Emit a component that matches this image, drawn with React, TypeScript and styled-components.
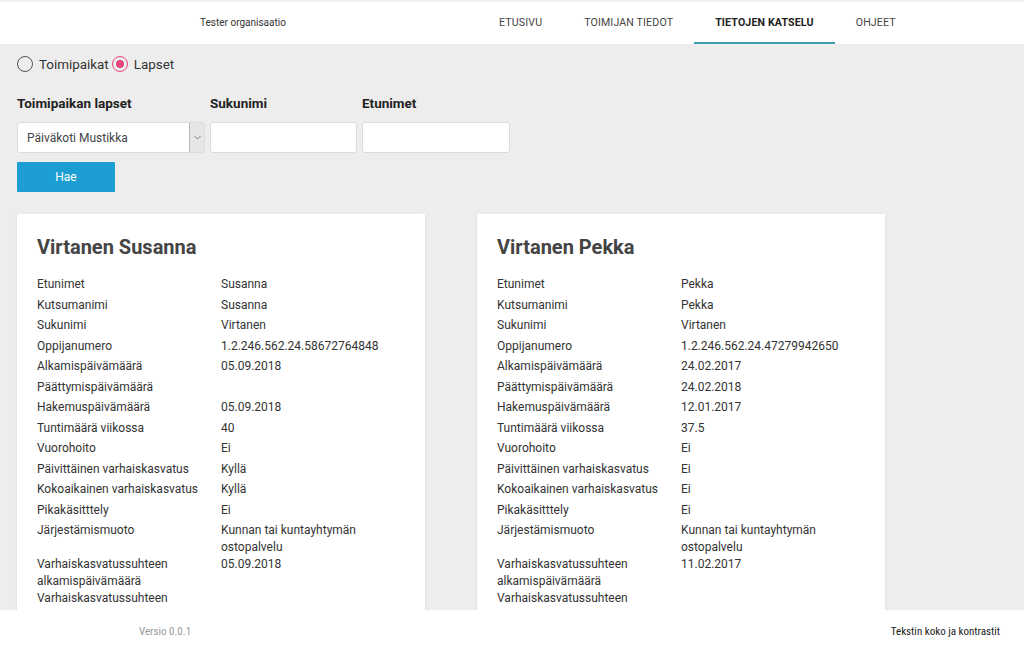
import styled, { createGlobalStyle } from "styled-components";

const GlobalStyle = createGlobalStyle`
  html, body {
    margin: 0;
    padding: 0;
    height: 100%;
    background: #ededed;
    font-family: Roboto, "Liberation Sans", sans-serif;
    color: #333;
  }
  #root {
    height: 100%;
  }
  * {
    box-sizing: border-box;
  }
`;

const Page = styled.div`
  display: flex;
  flex-direction: column;
  height: 100vh;
  overflow: hidden;
`;

const Header = styled.header`
  display: flex;
  align-items: stretch;
  height: 44px;
  background: #fff;
  border-top: 2px solid #f1f1f1;
  flex-shrink: 0;
`;

const Org = styled.div`
  width: 478px;
  display: flex;
  align-items: center;
  justify-content: center;
  font-size: 10px;
  color: #333;
  padding: 0 0 2px 8px;
`;

const Nav = styled.nav`
  display: flex;
`;

const Tab = styled.a<{ $active?: boolean }>`
  display: flex;
  align-items: center;
  padding: 0 21px 0;
  font-size: 10.6px;
  letter-spacing: 0.15px;
  color: ${(p) => (p.$active ? "#222" : "#444")};
  font-weight: ${(p) => (p.$active ? 700 : 400)};
  border-bottom: 2px solid ${(p) => (p.$active ? "#3d9db3" : "transparent")};
  text-decoration: none;
  cursor: pointer;
`;

const Main = styled.main`
  flex: 1;
  overflow: hidden;
  padding: 12px 17px 0;
`;

const RadioRow = styled.div`
  display: flex;
  align-items: center;
  gap: 3px;
  height: 16px;
`;

const RadioLabel = styled.label`
  display: flex;
  align-items: center;
  gap: 6px;
  font-size: 13.4px;
  color: #333;
  cursor: pointer;
`;

const RadioCircle = styled.span<{ $checked?: boolean }>`
  width: 16px;
  height: 16px;
  border-radius: 50%;
  border: 1.5px solid ${(p) => (p.$checked ? "#e8437c" : "#555")};
  display: flex;
  align-items: center;
  justify-content: center;
  &::after {
    content: "";
    width: 8px;
    height: 8px;
    border-radius: 50%;
    background: ${(p) => (p.$checked ? "#e8437c" : "transparent")};
  }
`;

const Fields = styled.div`
  display: flex;
  gap: 5px;
  margin-top: 23px;
`;

const Field = styled.div<{ $width: number }>`
  display: flex;
  flex-direction: column;
  width: ${(p) => p.$width}px;
`;

const FieldLabel = styled.label`
  font-size: 13.5px;
  font-weight: 700;
  color: #222;
  height: 17px;
  line-height: 17px;
  margin-bottom: 10px;
`;

const SelectBox = styled.div`
  display: flex;
  height: 31px;
  background: #fff;
  border: 1px solid #dcdcdc;
  border-radius: 3px;
  overflow: hidden;
`;

const Select = styled.select`
  flex: 1;
  border: none;
  appearance: none;
  background: transparent;
  font-family: inherit;
  font-size: 12px;
  color: #444;
  padding: 0 9px;
  outline: none;
`;

const SelectArrow = styled.span`
  width: 15px;
  display: flex;
  align-items: center;
  justify-content: center;
  background: #e6e6e6;
  border-left: 1px solid #b9b9b9;
  color: #777;
`;

const Input = styled.input`
  height: 31px;
  width: 100%;
  background: #fff;
  border: 1px solid #dcdcdc;
  border-radius: 3px;
  font-family: inherit;
  font-size: 12px;
  padding: 0 8px;
  outline: none;
`;

const Button = styled.button`
  display: block;
  margin-top: 9px;
  width: 98px;
  height: 30px;
  border: none;
  border-radius: 1px;
  background: #1d9ed3;
  color: #fff;
  font-family: inherit;
  font-size: 12px;
  cursor: pointer;
`;

const Cards = styled.div`
  display: grid;
  grid-template-columns: 408px 408px;
  gap: 52px;
  margin-top: 22px;
  align-items: start;
`;

const Card = styled.section`
  background: #fff;
  box-shadow: 0 1px 3px rgba(0, 0, 0, 0.08);
  padding: 21px 20px 20px;
`;

const Title = styled.h2`
  margin: 0 0 17px;
  font-size: 20px;
  font-weight: 700;
  color: #444;
  line-height: 24px;
`;

const Row = styled.div`
  display: grid;
  grid-template-columns: 184px 184px;
  min-height: 20.5px;
  font-size: 12px;
  line-height: 17px;
  color: #333;
`;

const Cell = styled.div`
  padding-right: 4px;
`;

const Footer = styled.footer`
  flex-shrink: 0;
  height: 45px;
  background: #fff;
  display: flex;
  align-items: center;
  justify-content: space-between;
  padding: 0 24px 2px 139px;
  font-family: "Liberation Sans Narrow", "Roboto Condensed", Roboto, sans-serif;
  font-size: 11px;
`;

const Version = styled.span`
  color: #999;
`;

const FooterLink = styled.a`
  color: #222;
  cursor: pointer;
`;

type Person = {
  name: string;
  rows: [string, string][];
};

const people: Person[] = [
  {
    name: "Virtanen Susanna",
    rows: [
      ["Etunimet", "Susanna"],
      ["Kutsumanimi", "Susanna"],
      ["Sukunimi", "Virtanen"],
      ["Oppijanumero", "1.2.246.562.24.58672764848"],
      ["Alkamispäivämäärä", "05.09.2018"],
      ["Päättymispäivämäärä", ""],
      ["Hakemuspäivämäärä", "05.09.2018"],
      ["Tuntimäärä viikossa", "40"],
      ["Vuorohoito", "Ei"],
      ["Päivittäinen varhaiskasvatus", "Kyllä"],
      ["Kokoaikainen varhaiskasvatus", "Kyllä"],
      ["Pikakäsitttely", "Ei"],
      ["Järjestämismuoto", "Kunnan tai kuntayhtymän ostopalvelu"],
      ["Varhaiskasvatussuhteen alkamispäivämäärä", "05.09.2018"],
      ["Varhaiskasvatussuhteen päättymispäivämäärä", ""],
    ],
  },
  {
    name: "Virtanen Pekka",
    rows: [
      ["Etunimet", "Pekka"],
      ["Kutsumanimi", "Pekka"],
      ["Sukunimi", "Virtanen"],
      ["Oppijanumero", "1.2.246.562.24.47279942650"],
      ["Alkamispäivämäärä", "24.02.2017"],
      ["Päättymispäivämäärä", "24.02.2018"],
      ["Hakemuspäivämäärä", "12.01.2017"],
      ["Tuntimäärä viikossa", "37.5"],
      ["Vuorohoito", "Ei"],
      ["Päivittäinen varhaiskasvatus", "Ei"],
      ["Kokoaikainen varhaiskasvatus", "Ei"],
      ["Pikakäsitttely", "Ei"],
      ["Järjestämismuoto", "Kunnan tai kuntayhtymän ostopalvelu"],
      ["Varhaiskasvatussuhteen alkamispäivämäärä", "11.02.2017"],
      ["Varhaiskasvatussuhteen päättymispäivämäärä", ""],
    ],
  },
];

const tabs = ["ETUSIVU", "TOIMIJAN TIEDOT", "TIETOJEN KATSELU", "OHJEET"];

const App = () => {
  return (
    <>
      <GlobalStyle />
      <Page>
        <Header>
          <Org>Tester organisaatio</Org>
          <Nav>
            {tabs.map((t) => (
              <Tab key={t} $active={t === "TIETOJEN KATSELU"}>
                {t}
              </Tab>
            ))}
          </Nav>
        </Header>
        <Main>
          <RadioRow>
            <RadioLabel>
              <RadioCircle />
              Toimipaikat
            </RadioLabel>
            <RadioLabel>
              <RadioCircle $checked />
              Lapset
            </RadioLabel>
          </RadioRow>
          <Fields>
            <Field $width={188}>
              <FieldLabel>Toimipaikan lapset</FieldLabel>
              <SelectBox>
                <Select defaultValue="mustikka">
                  <option value="mustikka">Päiväkoti Mustikka</option>
                </Select>
                <SelectArrow>
                  <svg width="7" height="5" viewBox="0 0 7 5">
                    <path d="M0.5 1 L3.5 4 L6.5 1" fill="none" stroke="#777" strokeWidth="0.9" />
                  </svg>
                </SelectArrow>
              </SelectBox>
            </Field>
            <Field $width={147}>
              <FieldLabel>Sukunimi</FieldLabel>
              <Input type="text" />
            </Field>
            <Field $width={148}>
              <FieldLabel>Etunimet</FieldLabel>
              <Input type="text" />
            </Field>
          </Fields>
          <Button>Hae</Button>
          <Cards>
            {people.map((p) => (
              <Card key={p.name}>
                <Title>{p.name}</Title>
                {p.rows.map(([k, v]) => (
                  <Row key={k}>
                    <Cell>{k}</Cell>
                    <Cell>{v}</Cell>
                  </Row>
                ))}
              </Card>
            ))}
          </Cards>
        </Main>
        <Footer>
          <Version>Versio 0.0.1</Version>
          <FooterLink>Tekstin koko ja kontrastit</FooterLink>
        </Footer>
      </Page>
    </>
  );
};

export default App;
